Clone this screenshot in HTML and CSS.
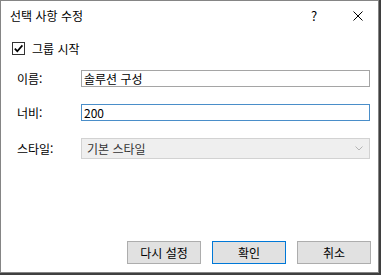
FILE: index.html
```html
<!DOCTYPE html>
<html lang="ko">
<head>
    <meta charset="UTF-8">
    <meta name="viewport" content="width=device-width, initial-scale=1.0">
    <title>선택 사항 수정</title>
    <link rel="stylesheet" href="styles.css">
</head>
<body>
    <div class="dialog">
        <!-- 제목 표시줄 -->
        <div class="titlebar">
            <span class="title">선택 사항 수정</span>
            <span class="help">?</span>
            <span class="close">
                <svg width="10" height="10" viewBox="0 0 10 10">
                    <path d="M0.5 0.5 L9.5 9.5 M9.5 0.5 L0.5 9.5" stroke="#000" stroke-width="1" fill="none"/>
                </svg>
            </span>
        </div>

        <div class="content">
            <!-- 그룹 시작 체크박스 -->
            <div class="check-row">
                <span class="checkbox">
                    <svg width="11" height="11" viewBox="0 0 11 11">
                        <path d="M1.8 5.6 L4.3 8.2 L9.4 2.4" stroke="#000" stroke-width="1.7" fill="none"/>
                    </svg>
                </span>
                <span>그룹 시작</span>
            </div>

            <!-- 입력 항목 -->
            <div class="form">
                <span class="label">이름:</span>
                <div class="field">솔루션 구성</div>

                <span class="label">너비:</span>
                <div class="field focused">200</div>

                <span class="label">스타일:</span>
                <div class="combo">
                    <span>기본 스타일</span>
                    <svg width="8" height="5" viewBox="0 0 8 5">
                        <path d="M0.5 0.5 L4 4 L7.5 0.5" stroke="#b4b4b4" stroke-width="1" fill="none"/>
                    </svg>
                </div>
            </div>
        </div>

        <!-- 버튼 -->
        <div class="buttons">
            <button class="btn">다시 설정</button>
            <button class="btn default">확인</button>
            <button class="btn">취소</button>
        </div>
    </div>
</body>
</html>
```

FILE: styles.css
```css
/* 기본 설정 */
body {
    margin: 0;
    width: 381px;
    height: 275px;
    background-color: #3f3f3f;
    font-family: "Noto Sans CJK KR", "Noto Sans", sans-serif;
    font-size: 12px;
    color: #000;
}

/* 대화 상자 */
.dialog {
    box-sizing: border-box;
    width: 379px;
    height: 273px;
    border: 1px solid #858585;
    background-color: #fff;
    display: flex;
    flex-direction: column;
}

/* 제목 표시줄 */
.titlebar {
    height: 29px;
    display: flex;
    align-items: center;
    padding: 0 15px 0 9px;
}

.title {
    flex: 1;
}

.help {
    width: 20px;
    text-align: center;
    font-size: 13px;
    margin-right: 29px;
}

.close {
    width: 10px;
    height: 10px;
    display: flex;
}

/* 내용 */
.content {
    padding: 12px 8px 0 11px;
}

.check-row {
    display: flex;
    align-items: center;
    gap: 7px;
    height: 13px;
}

.checkbox {
    box-sizing: border-box;
    width: 13px;
    height: 13px;
    border: 1px solid #333;
    display: flex;
}

.form {
    display: grid;
    grid-template-columns: 64px 1fr;
    grid-template-rows: 17px 17px 21px;
    row-gap: 17px;
    margin-top: 15px;
    padding-left: 5px;
}

.label {
    display: flex;
    align-items: center;
}

.field {
    box-sizing: border-box;
    border: 1px solid #a5a5a5;
    padding-left: 2px;
    display: flex;
    align-items: center;
}

.field.focused {
    border-color: #4a8ec9;
}

.combo {
    box-sizing: border-box;
    border: 1px solid #d2d2d2;
    background-color: #efefef;
    color: #333;
    padding: 0 6px 0 5px;
    display: flex;
    align-items: center;
    justify-content: space-between;
}

/* 버튼 */
.buttons {
    margin-top: auto;
    display: flex;
    justify-content: flex-end;
    gap: 11px;
    padding: 0 7px 8px 0;
}

.btn {
    box-sizing: border-box;
    width: 74px;
    height: 23px;
    background-color: #e1e1e1;
    border: 1px solid #adadad;
    font-family: inherit;
    font-size: 12px;
    color: #000;
    padding: 0;
}

.btn.default {
    border-color: #0078d7;
}
```
